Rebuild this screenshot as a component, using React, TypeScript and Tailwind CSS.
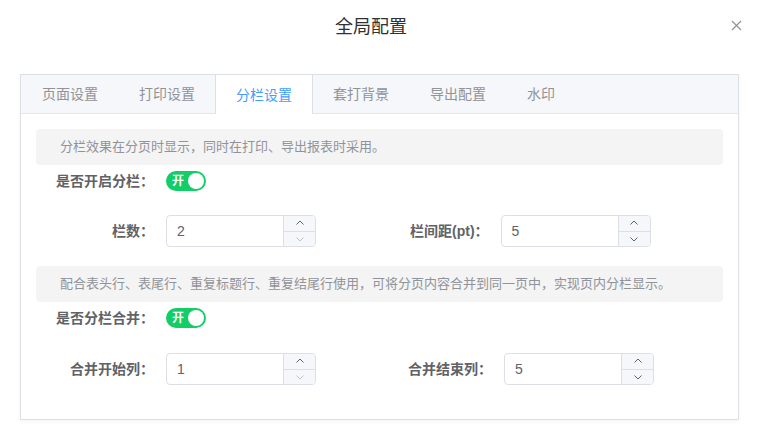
import { useState } from "react";

// 탭 목록
const TABS = ["页面设置", "打印设置", "分栏设置", "套打背景", "导出配置", "水印"];

const FONT = "font-['Helvetica_Neue','Liberation_Sans','Noto_Sans_CJK_SC',sans-serif]";

function Switch({ on }: { on: boolean }) {
    return (
        <div className="relative h-5 w-10 rounded-full bg-[#13ce66]">
            <span className="absolute left-[6px] top-0 text-[12px] font-bold leading-5 text-white">
                {on ? "开" : "关"}
            </span>
            <span className="absolute right-[2px] top-[2px] h-4 w-4 rounded-full bg-white" />
        </div>
    );
}

function NumberInput({ value, min }: { value: number; min: number }) {
    const atMin = value <= min;
    return (
        <div className="flex h-8 w-[150px] overflow-hidden rounded border border-[#dcdfe6] bg-white">
            <div className="flex flex-1 items-center pl-[10px] text-sm text-[#606266]">{value}</div>
            <div className="flex w-8 flex-col border-l border-[#dcdfe6] bg-[#f5f7fa]">
                <div className="flex flex-1 items-center justify-center border-b border-[#dcdfe6] text-[#606266]">
                    <svg width="10" height="10" viewBox="0 0 10 10" fill="none">
                        <path d="M1.5 6.5 5 3l3.5 3.5" stroke="currentColor" strokeWidth="1" />
                    </svg>
                </div>
                <div
                    className={
                        atMin
                            ? "flex flex-1 items-center justify-center text-[#c0c4cc]"
                            : "flex flex-1 items-center justify-center text-[#606266]"
                    }
                >
                    <svg width="10" height="10" viewBox="0 0 10 10" fill="none">
                        <path d="M1.5 3.5 5 7l3.5-3.5" stroke="currentColor" strokeWidth="1" />
                    </svg>
                </div>
            </div>
        </div>
    );
}

function Tip({ text }: { text: string }) {
    return (
        <div className="rounded bg-[#f4f4f5] py-2 pl-6 text-[13px] leading-5 text-[#909399]">
            {text}
        </div>
    );
}

export default function App() {
    const [active, setActive] = useState(2);

    return (
        <div className={`h-[444px] w-[759px] bg-white ${FONT}`}>
            {/* 제목 */}
            <div className="relative flex h-[54px] items-center justify-center pr-[17px]">
                <span className="text-lg text-[#303133]">全局配置</span>
                <svg
                    className="absolute right-[17px] top-[20px]"
                    width="11"
                    height="11"
                    viewBox="0 0 11 11"
                    fill="none"
                >
                    <path d="M1 1l9 9M10 1 1 10" stroke="#909399" strokeWidth="1.2" />
                </svg>
            </div>

            <div className="mx-5 mt-5 border border-[#dcdfe6] shadow-[0_2px_4px_rgba(0,0,0,0.04)]">
                {/* 탭 헤더 */}
                <div className="flex h-[39px] border-b border-[#e4e7ed] bg-[#f5f7fa]">
                    {TABS.map((tab, i) => (
                        <div
                            key={tab}
                            onClick={() => setActive(i)}
                            className={
                                i === active
                                    ? "-mb-px flex h-[39px] items-center border-x border-[#dcdfe6] bg-white px-5 text-sm text-[#409eff] " +
                                      (i === 0 ? "" : "-ml-px")
                                    : "flex h-[38px] items-center border-x border-transparent px-5 text-sm text-[#909399] " +
                                      (i === 0 ? "" : "-ml-px")
                            }
                        >
                            {tab}
                        </div>
                    ))}
                </div>

                {/* 분栏 설정 */}
                <div className="flex flex-col p-[15px] pb-4">
                    <Tip text="分栏效果在分页时显示，同时在打印、导出报表时采用。" />

                    <div className="mb-[18px] flex h-8 items-center">
                        <label className="w-[130px] pr-3 text-right text-sm font-bold text-[#606266]">
                            是否开启分栏：
                        </label>
                        <Switch on />
                    </div>

                    <div className="mb-[19px] flex h-8 items-center">
                        <label className="w-[130px] pr-3 text-right text-sm font-bold text-[#606266]">栏数：</label>
                        <NumberInput value={2} min={2} />
                        <label className="ml-[94px] pr-3 text-sm font-bold text-[#606266]">栏间距(pt)：</label>
                        <NumberInput value={5} min={0} />
                    </div>

                    <Tip text="配合表头行、表尾行、重复标题行、重复结尾行使用，可将分页内容合并到同一页中，实现页内分栏显示。" />

                    <div className="mb-[19px] flex h-8 items-center">
                        <label className="w-[130px] pr-3 text-right text-sm font-bold text-[#606266]">
                            是否分栏合并：
                        </label>
                        <Switch on />
                    </div>

                    <div className="mb-[18px] flex h-8 items-center">
                        <label className="w-[130px] pr-3 text-right text-sm font-bold text-[#606266]">
                            合并开始列：
                        </label>
                        <NumberInput value={1} min={1} />
                        <label className="ml-[92px] pr-3 text-sm font-bold text-[#606266]">合并结束列：</label>
                        <NumberInput value={5} min={1} />
                    </div>
                </div>
            </div>
        </div>
    );
}
